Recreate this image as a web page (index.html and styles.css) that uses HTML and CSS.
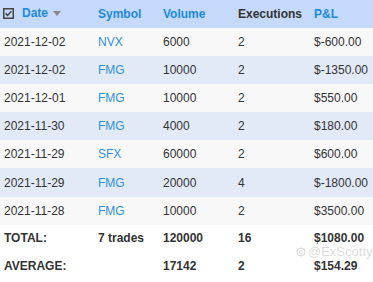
FILE: index.html
```html
<!DOCTYPE html>
<html>
<head>
<meta charset="utf-8">
<link rel="stylesheet" href="styles.css">
</head>
<body>
<div class="wrap">
<table class="trades">
  <colgroup>
    <col class="c1"><col class="c2"><col class="c3"><col class="c4"><col class="c5">
  </colgroup>
  <thead>
    <tr>
      <th class="link"><span class="date-head"><svg class="chk" width="11" height="11" viewBox="0 0 11 11"><rect x="0.75" y="0.75" width="9.5" height="9.5" fill="none" stroke="#444" stroke-width="1.5"/><path d="M2.6 5.4 L4.6 7.4 L8.4 3.3" fill="none" stroke="#444" stroke-width="1.5"/></svg>Date<span class="arrow"></span></span></th>
      <th class="link">Symbol</th>
      <th class="link">Volume</th>
      <th>Executions</th>
      <th class="link">P&amp;L</th>
    </tr>
  </thead>
  <tbody>
    <tr><td>2021-12-02</td><td class="sym">NVX</td><td>6000</td><td>2</td><td>$-600.00</td></tr>
    <tr><td>2021-12-02</td><td class="sym">FMG</td><td>10000</td><td>2</td><td>$-1350.00</td></tr>
    <tr><td>2021-12-01</td><td class="sym">FMG</td><td>10000</td><td>2</td><td>$550.00</td></tr>
    <tr><td>2021-11-30</td><td class="sym">FMG</td><td>4000</td><td>2</td><td>$180.00</td></tr>
    <tr><td>2021-11-29</td><td class="sym">SFX</td><td>60000</td><td>2</td><td>$600.00</td></tr>
    <tr><td>2021-11-29</td><td class="sym">FMG</td><td>20000</td><td>4</td><td>$-1800.00</td></tr>
    <tr><td>2021-11-28</td><td class="sym">FMG</td><td>10000</td><td>2</td><td>$3500.00</td></tr>
  </tbody>
  <tfoot>
    <tr><td>TOTAL:</td><td>7 trades</td><td>120000</td><td>16</td><td>$1080.00</td></tr>
    <tr><td>AVERAGE:</td><td></td><td>17142</td><td>2</td><td>$154.29</td></tr>
  </tfoot>
</table>
<div class="watermark"><svg width="10" height="10" viewBox="0 0 10 10"><circle cx="5" cy="5" r="4" fill="none" stroke="rgba(150,150,150,0.4)" stroke-width="1"/><circle cx="5" cy="5.5" r="1.6" fill="none" stroke="rgba(150,150,150,0.4)" stroke-width="0.8"/></svg><span>@ExScotty</span></div>
</div>
</body>
</html>
```

FILE: styles.css
```css
html, body {
  margin: 0;
  padding: 0;
  background: #ffffff;
}
.wrap {
  position: relative;
  width: 373px;
  height: 282px;
  overflow: hidden;
}
.trades {
  border-collapse: collapse;
  table-layout: fixed;
  width: 373px;
  font-family: "Liberation Sans", Arial, sans-serif;
  font-size: 12px;
  color: #333333;
}
.c1 { width: 94px; }
.c2 { width: 65px; }
.c3 { width: 75px; }
.c4 { width: 76px; }
.c5 { width: 63px; }
.trades th, .trades td {
  text-align: left;
  padding: 0 0 0 4px;
  white-space: nowrap;
}
.trades thead tr {
  background: #c5d9fa;
  height: 28px;
}
.trades th {
  font-weight: bold;
  color: #333333;
}
.trades th.link { color: #1c8ad8; }
.date-head {
  display: inline-flex;
  align-items: center;
}
.chk {
  margin-left: -1px;
  margin-right: 8px;
}
.arrow {
  display: inline-block;
  margin-left: 5px;
  width: 0;
  height: 0;
  border-left: 4px solid transparent;
  border-right: 4px solid transparent;
  border-top: 5px solid #888888;
}
.trades tbody tr { height: 28.1px; }
.trades tbody tr:nth-child(odd) { background: #f8f8f8; }
.trades tbody tr:nth-child(even) { background: #e2eaf8; }
.trades td.sym { color: #2e90dc; }
.trades tfoot tr { height: 28px; background: #ffffff; }
.trades tfoot td { font-weight: bold; padding-bottom: 1px; }
.watermark {
  position: absolute;
  left: 296px;
  top: 246px;
  display: flex;
  align-items: center;
  gap: 2px;
  font-family: "Liberation Sans", Arial, sans-serif;
  font-size: 13px;
  line-height: 12px;
  color: rgba(150, 150, 150, 0.35);
  pointer-events: none;
}
```
